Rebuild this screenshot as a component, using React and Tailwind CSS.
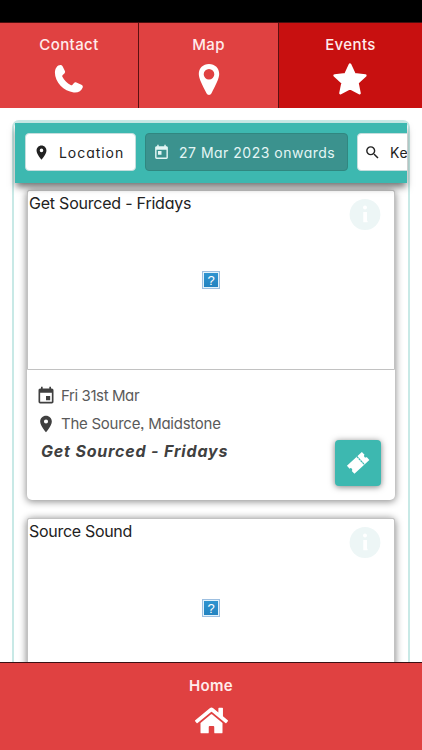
import React from "react";
import { MdLocationOn, MdEvent, MdToday, MdSearch } from "react-icons/md";
import { FaHome } from "react-icons/fa";

const rounded = "font-['Inter','Liberation_Sans',sans-serif] [font-feature-settings:'cv11','ss03'] whitespace-nowrap";

function PinIcon() {
  return (
    <svg width="22" height="33" viewBox="0 0 22 33" fill="#fff">
      <path fillRule="evenodd" d="M11 1C5 1 .8 5.200.8 11c0 4.600 3.600 11 7.700 19.300 1.200 2.300 3.800 2.300 5 0C17.600 22 21.200 15.600 21.200 11 21.200 5.200 17 1 11 1Zm0 4.900a5.300 5.300 0 1 1 0 10.600 5.300 5.300 0 0 1 0-10.600Z" />
    </svg>
  );
}

function PhoneIcon() {
  return (
    <svg width="30" height="30" viewBox="0 0 30 30" fill="#fff">
      <path d="M2.400 3.400C3.600 1.700 5.300.9 6.900 1.100c.9.1 1.400.7 1.800 1.500l2.200 4.500c.4.9.2 1.700-.5 2.300L8.700 10.900c-.6.6-.7 1.200-.3 1.900 1.700 3.300 4.800 6.500 8.200 8.200.7.4 1.300.3 1.900-.3l1.500-1.700c.7-.8 1.500-.9 2.400-.5l5 2.200c1.300.6 1.700 1.500 1.300 2.800-1.100 3.500-4.600 5.300-9 4.900C9.800 27.500.9 18.300.9 8.600c0-2 .5-3.800 1.500-5.200Z" />
    </svg>
  );
}

function StarIcon() {
  return (
    <svg width="36" height="36" viewBox="0 0 36 36">
      <path fill="#fff" stroke="#fff" strokeWidth="2.600" strokeLinejoin="round" d="M17 3.600l4.500 9.600 10.800 1.300-7.900 7.300 2.100 10.400L17 27.200l-9.500 5 2.100-10.400-7.900-7.300 10.800-1.300Z" />
    </svg>
  );
}

function Tab({ label, active, last, children }) {
  return (
    <div className={`flex flex-col items-center pt-[13px] ${last ? "" : "border-r-[1.5px] border-[#5a1010]"} ${active ? "bg-[#c81010]" : "bg-[#e04141]"}`}>
      <span className="h-[18px] font-['Inter','Liberation_Sans',sans-serif] text-[15px] font-medium leading-[18px] tracking-[0.4px] text-[#ffecec]">{label}</span>
      <div className="mt-[7px] flex h-[36px] items-center justify-center text-white">{children}</div>
    </div>
  );
}

function MissingImage() {
  return (
    <div className="flex size-[18px] items-center justify-center border border-[#9dbfe0] bg-[#e2f2fb] p-px">
      <div className="flex size-full items-center justify-center bg-gradient-to-b from-[#2f94d0] to-[#2383c0] font-['Liberation_Sans',sans-serif] text-[13px] leading-none text-white">?</div>
    </div>
  );
}

function TicketIcon() {
  return (
    <svg width="26" height="26" viewBox="0 0 26 26">
      <g transform="rotate(-43 13 13)">
        <path fill="#fff" d="M3 7.500h20.400v3.900a1.600 1.600 0 0 0 0 3.200v3.900H3v-3.900a1.600 1.600 0 0 0 0-3.200Z" />
        <path d="M16.600 7.500v11" stroke="#3db8b0" strokeWidth="1.200" strokeDasharray="2.300 .4" />
      </g>
    </svg>
  );
}

function Card({ title, titleClass, children }) {
  return (
    <div className="h-[310px] w-[368px] shrink-0 rounded-[5px] bg-white shadow-[0_1px_7px_1px_rgba(0,0,0,0.42)]">
      <div className="relative flex h-[180px] items-center justify-center rounded-t-[2px] border border-[#c2c2c2]">
        <span className={`absolute left-[1px] top-0 text-[16px] leading-[24px] text-[#222] ${rounded} ${titleClass}`}>{title}</span>
        <svg className="absolute right-[13px] top-[7px]" width="32" height="32" viewBox="0 0 32 32">
          <circle cx="16" cy="16.500" r="15.400" fill="#edf6f6" />
          <circle cx="16" cy="9.500" r="2" fill="#fff" />
          <path d="M14.300 14H18v8.800h.6v1.400h-4.300Z" fill="#fff" />
        </svg>
        <MissingImage />
      </div>
      {children}
    </div>
  );
}

export default function App() {
  return (
    <div className="flex h-[750px] w-[422px] flex-col overflow-hidden bg-white">
      <div className="h-[22px] shrink-0 bg-black" />
      <header className="grid h-[86px] shrink-0 grid-cols-[139px_140px_143px] border-t border-[#4a0e0e]">
        <Tab label="Contact"><PhoneIcon /></Tab>
        <Tab label="Map"><PinIcon /></Tab>
        <Tab label="Events" active last><StarIcon /></Tab>
      </header>
      <main className="min-h-0 flex-1 overflow-hidden px-[12px] pt-[12px]">
        <div className="h-[600px] w-[398px] rounded-[7px] border-2 border-t-[3px] border-[#c8e9e6] px-px">
          <div className="relative z-10 h-[60px] w-[392px] bg-[#3db8b0] shadow-[0_5px_7px_-1px_rgba(0,0,0,0.55)]">
            <div className="flex h-full gap-[9px] overflow-hidden pl-[10px] pt-[10px]">
              <div className="flex h-[38px] w-[111px] shrink-0 items-center rounded-[4px] border border-[#c5dddd] bg-white pl-[7px] text-[#222]">
                <MdLocationOn size={17} />
                <span className={`ml-[9px] text-[14px] tracking-[0.95px] ${rounded}`}>Location</span>
              </div>
              <div className="flex h-[38px] w-[203px] shrink-0 items-center rounded-[4px] border border-[#308780] bg-[#3b928e] pl-[7px] text-[#e4f6f5]">
                <MdToday size={17} />
                <span className={`ml-[9px] text-[14px] tracking-[0.5px] ${rounded}`}>27 Mar 2023 onwards</span>
              </div>
              <div className="flex h-[38px] w-[110px] shrink-0 items-center rounded-[4px] border border-[#c5dddd] bg-white pl-[6px] text-[#222]">
                <MdSearch size={17} />
                <span className={`ml-[9px] text-[14px] tracking-[0.6px] ${rounded}`}>Ke</span>
              </div>
            </div>
          </div>
          <div className="flex flex-col gap-[18px] pl-[12px] pt-[7px]">
            <Card title="Get Sourced - Fridays" titleClass="tracking-[-0.22px]">
              <div className="flex h-[130px] justify-between pl-[9px] pr-[14px]">
                <div className="pt-[12px] text-[#404040]">
                  <div className="flex h-[28px] items-center">
                    <MdEvent size={20} />
                    <span className={`ml-[5px] text-[15px] tracking-[-0.4px] text-[#5a5a5a] ${rounded}`}>Fri 31st Mar</span>
                  </div>
                  <div className="flex h-[28px] items-center">
                    <MdLocationOn size={20} />
                    <span className={`ml-[5px] text-[15px] tracking-[-0.26px] text-[#5a5a5a] ${rounded}`}>The Source, Maidstone</span>
                  </div>
                  <div className={`pl-[5px] text-[16px] font-bold italic leading-[26px] tracking-[0.82px] text-[#404040] ${rounded}`}>Get Sourced - Fridays</div>
                </div>
                <div className="mt-[70px] flex size-[46px] items-center justify-center rounded-[4px] bg-[#3db8b0] shadow-[0_1px_6px_rgba(0,0,0,0.5)]">
                  <TicketIcon />
                </div>
              </div>
            </Card>
            <Card title="Source Sound" titleClass="tracking-[-0.3px]" />
          </div>
        </div>
      </main>
      <footer className="relative z-20 flex h-[88px] shrink-0 flex-col items-center border-t border-[#3a1014] bg-[#e04141] pt-[14px]">
        <span className="font-['Inter','Liberation_Sans',sans-serif] text-[15px] font-semibold leading-[18px] tracking-[0.3px] text-[#ffecec]">Home</span>
        <FaHome className="mt-[9px] text-white" size={33} />
      </footer>
    </div>
  );
}
